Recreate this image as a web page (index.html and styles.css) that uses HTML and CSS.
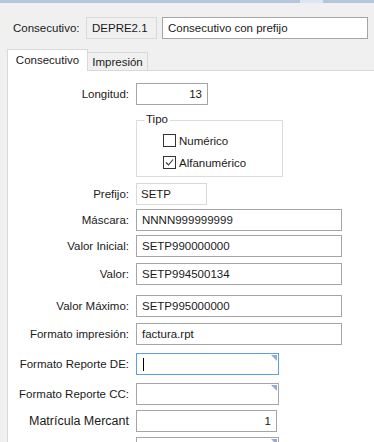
FILE: index.html
```html
<!DOCTYPE html>
<html lang="es">
<head>
    <meta charset="UTF-8">
    <meta name="viewport" content="width=device-width, initial-scale=1.0">
    <title>Consecutivo</title>
    <link rel="stylesheet" href="styles.css">
</head>
<body>
    <div class="topbar"><span class="topbar-mark"></span></div>

    <!-- Header: code and description -->
    <div class="header">
        <span class="header-label">Consecutivo:</span>
        <div class="field field-readonly code">DEPRE2.1</div>
        <div class="field name">Consecutivo con prefijo</div>
    </div>

    <!-- Tabs -->
    <div class="tabs">
        <div class="tab tab-active">Consecutivo</div>
        <div class="tab">Impresión</div>
    </div>

    <div class="panel">
        <div class="row mt12">
            <label>Longitud:</label>
            <div class="field w72 num">13</div>
        </div>
        <div class="row mt15">
            <span></span>
            <div class="group">
                <span class="group-title">Tipo</span>
                <div class="check-row">
                    <span class="checkbox"></span>Numérico
                </div>
                <div class="check-row">
                    <span class="checkbox">
                        <svg width="11" height="11" viewBox="0 0 11 11"><path d="M2 5.5 L4.5 8 L9 2.5" fill="none" stroke="#333" stroke-width="1.1"/></svg>
                    </span>Alfanumérico
                </div>
            </div>
        </div>
        <div class="row mt6">
            <label>Prefijo:</label>
            <div class="field field-light w71">SETP</div>
        </div>
        <div class="row mt4">
            <label>Máscara:</label>
            <div class="field w206">NNNN999999999</div>
        </div>
        <div class="row mt4">
            <label>Valor Inicial:</label>
            <div class="field w206">SETP990000000</div>
        </div>
        <div class="row mt6">
            <label>Valor:</label>
            <div class="field w206">SETP994500134</div>
        </div>
        <div class="row mt10">
            <label>Valor Máximo:</label>
            <div class="field w206">SETP995000000</div>
        </div>
        <div class="row mt6">
            <label>Formato impresión:</label>
            <div class="field w206">factura.rpt</div>
        </div>
        <div class="row mt8">
            <label>Formato Reporte DE:</label>
            <div class="field field-focus lookup w143"><span class="caret"></span></div>
        </div>
        <div class="row mt8">
            <label>Formato Reporte CC:</label>
            <div class="field lookup w143"></div>
        </div>
        <div class="row mt5">
            <label class="label-big">Matrícula Mercant</label>
            <div class="field w141 num">1</div>
        </div>
        <div class="row mt5">
            <span></span>
            <div class="field lookup w143"></div>
        </div>
    </div>
</body>
</html>
```

FILE: styles.css
```css
body {
    margin: 0;
    width: 374px;
    height: 442px;
    overflow: hidden;
    background-color: #f0f0f0;
    font-family: "Liberation Sans", Arial, sans-serif;
    font-size: 11.5px;
    color: #1a1a1a;
}

.topbar {
    height: 3px;
    background-color: #b4c6de;
    display: flex;
    padding-left: 300px;
}

.topbar-mark {
    width: 23px;
    background-color: #dde6f1;
}

/* Header row */
.header {
    display: flex;
    align-items: center;
    height: 22px;
    margin-top: 14px;
    padding-left: 13px;
}

.header-label {
    width: 73px;
}

.field {
    box-sizing: border-box;
    height: 22px;
    border: 1px solid #a5a5a5;
    background-color: #fff;
    padding: 0 5px;
    display: flex;
    align-items: center;
    white-space: nowrap;
    position: relative;
}

.field-readonly {
    background-color: #f0f0f0;
    border-color: #d9d9d9;
}

.field-light {
    border-color: #d9d9d9;
}

.field-focus {
    border-color: #5a9fe3;
}

.code {
    width: 71px;
}

.name {
    width: 206px;
    margin-left: 5px;
}

.num {
    justify-content: flex-end;
}

/* small lookup triangle in the corner */
.lookup::after {
    content: "";
    position: absolute;
    top: 1px;
    right: 1px;
    border-top: 6px solid #8eaed2;
    border-left: 6px solid transparent;
}

.caret {
    width: 1px;
    height: 13px;
    background-color: #000;
    margin-left: 1px;
}

/* Tabs */
.tabs {
    display: flex;
    align-items: flex-end;
    height: 21px;
    margin-top: 10px;
    padding-left: 7px;
}

.tab {
    box-sizing: border-box;
    height: 18px;
    width: 60px;
    border: 1px solid #d9d9d9;
    border-bottom: none;
    border-left: none;
    display: flex;
    align-items: center;
    justify-content: center;
}

.tab-active {
    height: 22px;
    width: 81px;
    border-left: 1px solid #d9d9d9;
    background-color: #fff;
    margin-bottom: -1px;
    position: relative;
    z-index: 1;
    padding-bottom: 2px;
}

.panel {
    margin-left: 7px;
    height: 380px;
    background-color: #fff;
    border-top: 1px solid #d9d9d9;
    border-left: 1px solid #d9d9d9;
}

.row {
    display: grid;
    grid-template-columns: 121px auto;
    column-gap: 7px;
    align-items: center;
    justify-items: start;
}

.row label {
    justify-self: end;
    white-space: nowrap;
}

.label-big {
    font-size: 12.5px;
}

.mt4 { margin-top: 4px; }
.mt5 { margin-top: 5px; }
.mt6 { margin-top: 6px; }
.mt8 { margin-top: 8px; }
.mt10 { margin-top: 10px; }
.mt12 { margin-top: 12px; }
.mt15 { margin-top: 15px; }

.w71 { width: 71px; padding-left: 4px; }
.w72 { width: 72px; }
.w141 { width: 141px; }
.w143 { width: 143px; }
.w206 { width: 206px; }

/* Tipo group box */
.group {
    box-sizing: border-box;
    width: 147px;
    height: 57px;
    border: 1px solid #dcdcdc;
    position: relative;
    padding: 13px 0 0 26px;
}

.group-title {
    position: absolute;
    top: -8px;
    left: 7px;
    padding: 0 2px;
    background-color: #fff;
}

.check-row {
    display: flex;
    align-items: center;
    height: 13px;
    margin-bottom: 9px;
}

.checkbox {
    box-sizing: border-box;
    width: 13px;
    height: 13px;
    border: 1px solid #333;
    margin-right: 3px;
    display: flex;
    align-items: center;
    justify-content: center;
}
```
